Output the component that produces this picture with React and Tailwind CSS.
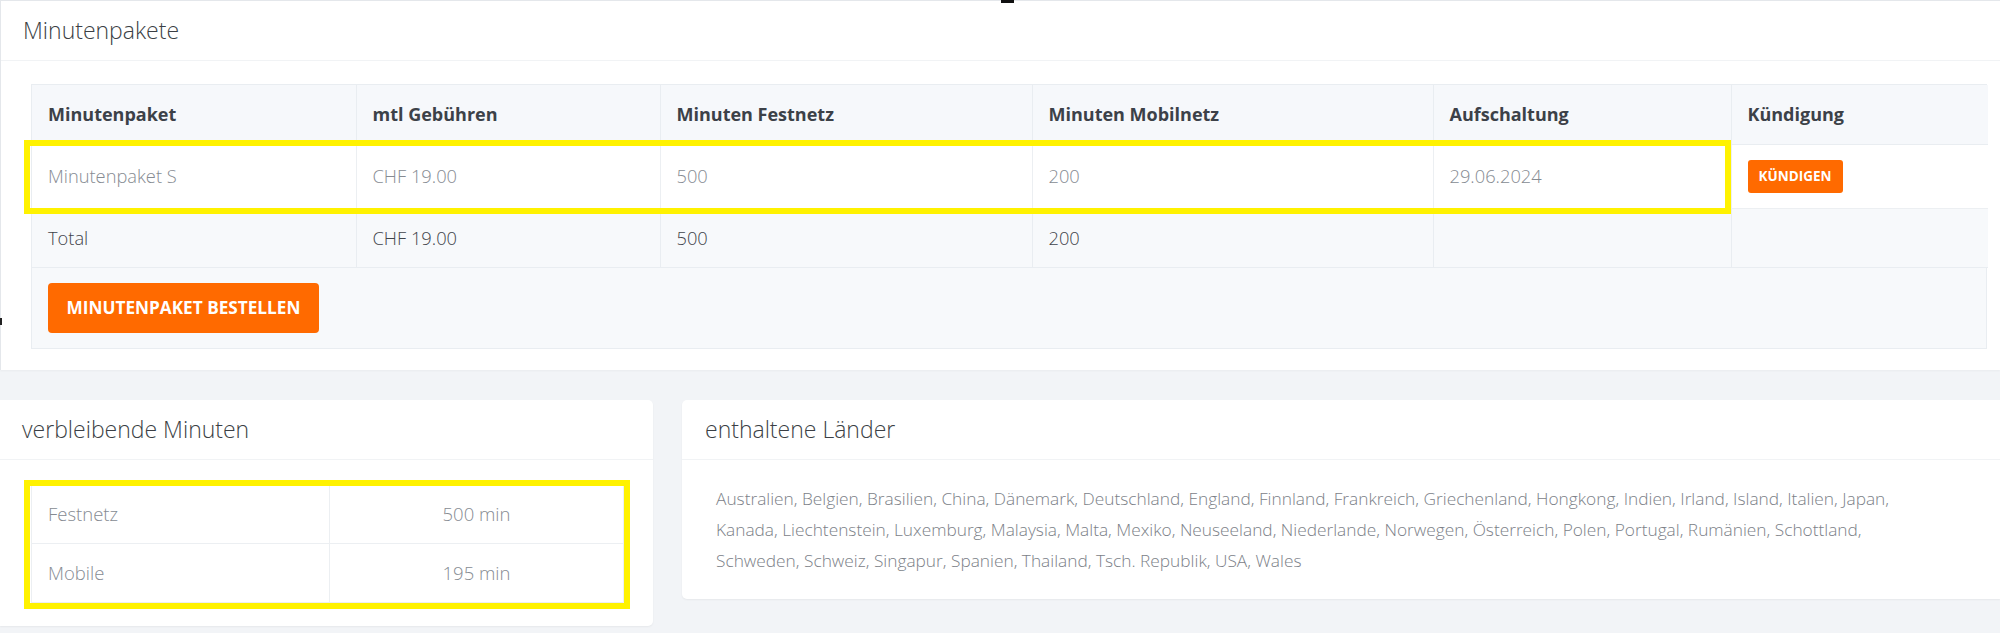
import React from "react";

const font = { fontFamily: '"Open Sans", "Liberation Sans", sans-serif' };

const cols = [
  { w: "w-[324px]", h: "Minutenpaket" },
  { w: "w-[304px]", h: "mtl Gebühren" },
  { w: "w-[372px]", h: "Minuten Festnetz" },
  { w: "w-[401px]", h: "Minuten Mobilnetz" },
  { w: "w-[298px]", h: "Aufschaltung" },
  { w: "w-[257px]", h: "Kündigung" },
];

export default function App() {
  const row1 = ["Minutenpaket S", "CHF 19.00", "500", "200", "29.06.2024"];
  const total = ["Total", "CHF 19.00", "500", "200", "", ""];
  return (
    <div style={font} className="relative w-[2000px] h-[633px] overflow-hidden bg-[#f2f4f7]">
      {/* top card */}
      <div className="h-[370px] bg-white border-t border-l border-[#e4e7eb] shadow-[0_1px_2px_rgba(0,0,0,0.04)]">
        <div className="h-[60px] flex items-center pl-[22px] border-b border-[#f1f3f5]">
          <span className="text-[23px] font-light text-[#3b3f45]">Minutenpakete</span>
        </div>
        <div className="pt-[23px] pl-[30px] pr-[13px]">
          <div className="border border-[#e9edf1] bg-[#f7f9fb]">
            <table className="w-full border-collapse table-fixed">
              <thead>
                <tr className="h-[59px] bg-[#f6f8fb]">
                  {cols.map((c, i) => (
                    <th
                      key={i}
                      className={`${c.w} text-left px-4 text-[18px] font-bold text-[#3c4148] border-b border-[#e9edf1] ${i < 5 ? "border-r" : ""}`}
                    >
                      {c.h}
                    </th>
                  ))}
                </tr>
              </thead>
              <tbody>
                <tr className="h-[64px] bg-white">
                  {row1.map((t, i) => (
                    <td key={i} className="px-4 text-[18.3px] font-light text-[#868b92] border-b border-r border-[#eceff2]">
                      {t}
                    </td>
                  ))}
                  <td className="px-4 border-b border-[#eceff2]">
                    <button className="h-[33px] w-[95px] rounded-[3px] bg-[#ff6a00] text-white text-[13.5px] font-bold">
                      KÜNDIGEN
                    </button>
                  </td>
                </tr>
                <tr className="h-[59px] bg-[#f7f9fb]">
                  {total.map((t, i) => (
                    <td key={i} className={`px-4 text-[18.3px] font-light text-[#3f444a] border-b border-[#e9edf1] ${i < 5 ? "border-r" : ""}`}>
                      {t}
                    </td>
                  ))}
                </tr>
              </tbody>
            </table>
            <div className="h-[80px] flex items-center pl-4">
              <button className="h-[50px] w-[271px] rounded-[4px] bg-[#ff6a00] text-white text-[17.2px] font-bold">
                MINUTENPAKET BESTELLEN
              </button>
            </div>
          </div>
        </div>
      </div>

      {/* bottom cards */}
      <div className="flex gap-[29px] pt-[30px]">
        <div className="w-[653px] h-[226px] shrink-0 bg-white rounded-r-[5px] shadow-[0_1px_2px_rgba(0,0,0,0.05)]">
          <div className="h-[60px] flex items-center pl-[22px] border-b border-[#f1f3f5]">
            <span className="text-[23px] font-light text-[#3b3f45]">verbleibende Minuten</span>
          </div>
          <div className="pt-[24px] pl-[31px] pr-[29px]">
            <div className="border border-[#eceff2]">
              <div className="flex h-[59px] border-b border-[#eceff2]">
                <div className="w-[298px] flex items-center px-4 border-r border-[#eceff2] text-[18.5px] font-light text-[#868b92]">Festnetz</div>
                <div className="flex-1 flex items-center justify-center text-[18.5px] font-light text-[#868b92]">500 min</div>
              </div>
              <div className="flex h-[58px]">
                <div className="w-[298px] flex items-center px-4 border-r border-[#eceff2] text-[18.5px] font-light text-[#868b92]">Mobile</div>
                <div className="flex-1 flex items-center justify-center text-[18.5px] font-light text-[#868b92]">195 min</div>
              </div>
            </div>
          </div>
        </div>
        <div className="flex-1 h-[199px] bg-white rounded-l-[5px] shadow-[0_1px_2px_rgba(0,0,0,0.05)]">
          <div className="h-[60px] flex items-center pl-[23px] border-b border-[#f1f3f5]">
            <span className="text-[23px] font-light text-[#3b3f45]">enthaltene Länder</span>
          </div>
          <div className="pt-[23px] pl-[34px] text-[17.3px] leading-[31px] font-light text-[#7c8188] whitespace-nowrap">
            Australien, Belgien, Brasilien, China, Dänemark, Deutschland, England, Finnland, Frankreich, Griechenland, Hongkong, Indien, Irland, Island, Italien, Japan,
            <br />
            Kanada, Liechtenstein, Luxemburg, Malaysia, Malta, Mexiko, Neuseeland, Niederlande, Norwegen, Österreich, Polen, Portugal, Rumänien, Schottland,
            <br />
            Schweden, Schweiz, Singapur, Spanien, Thailand, Tsch. Republik, USA, Wales
          </div>
        </div>
      </div>

      {/* highlight overlays */}
      <div className="absolute left-[24px] top-[140px] w-[1707px] h-[74px] border-[6px] border-[#fff200] pointer-events-none" />
      <div className="absolute left-[24px] top-[480px] w-[606px] h-[129px] border-[6px] border-[#fff200] pointer-events-none" />

      {/* small screen marks */}
      <div className="absolute left-[1001px] top-0 w-[13px] h-[3px] bg-[#111]" />
      <div className="absolute left-0 top-[318px] w-[2px] h-[7px] bg-[#222]" />
    </div>
  );
}
